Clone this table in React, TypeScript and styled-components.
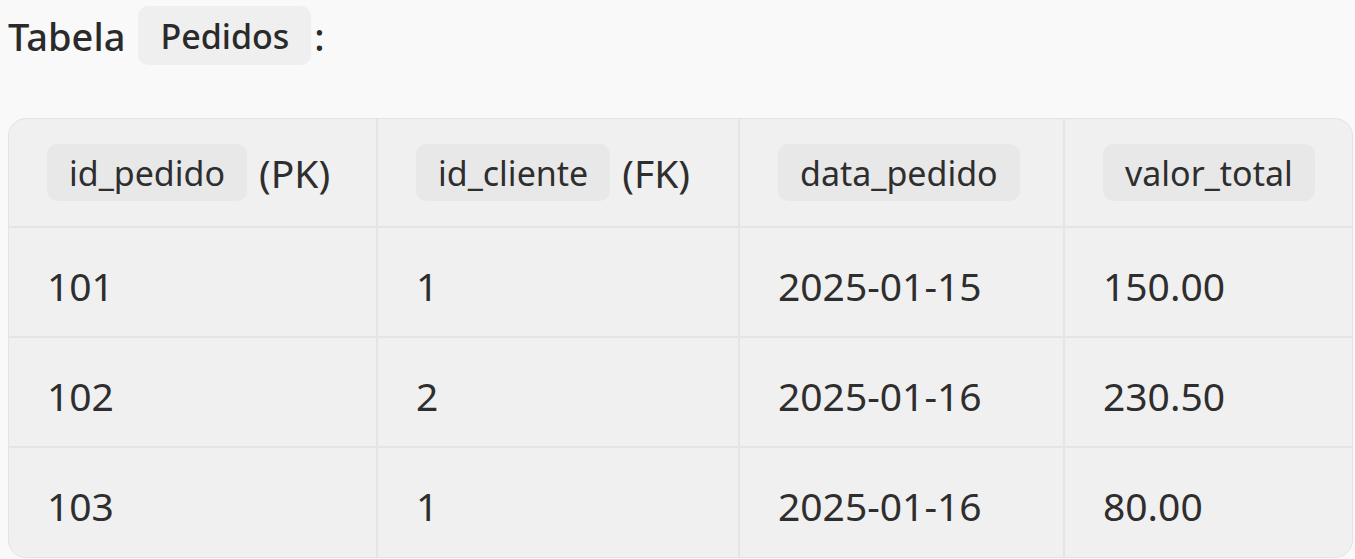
import React from "react";
import styled, { createGlobalStyle } from "styled-components";

const GlobalStyle = createGlobalStyle`
  html, body {
    margin: 0;
    padding: 0;
    background: #f9f9f9;
  }
  body {
    font-family: "Noto Sans", "Open Sans", sans-serif;
    color: #2e2e2e;
  }
`;

const Page = styled.div`
  padding: 6px 0 0 8px;
`;

const Title = styled.h3`
  margin: 0;
  height: 59px;
  display: flex;
  align-items: center;
  font-size: 38px;
  font-weight: 500;
  color: #2a2a2a;
  line-height: 1;
`;

const TitleChip = styled.code`
  font-family: inherit;
  font-size: 34px;
  font-weight: 500;
  height: 59px;
  display: inline-flex;
  align-items: center;
  padding: 0 22px;
  margin: 0 3px 0 13px;
  border-radius: 10px;
  background: #efefef;
`;

const Table = styled.div`
  margin-top: 53px;
  width: 1345px;
  box-sizing: border-box;
  border: 1px solid #e3e3e3;
  border-radius: 18px;
  overflow: hidden;
  background: #f0f0f0;
  display: grid;
  grid-template-columns: 369px 362px 325px 287px;
`;

const Cell = styled.div<{ $head?: boolean; $lastCol?: boolean; $lastRow?: boolean }>`
  box-sizing: border-box;
  height: ${(p) => (p.$head || p.$lastRow ? 109 : 110)}px;
  padding-left: 38px;
  display: flex;
  align-items: center;
  gap: 12px;
  font-size: 39px;
  line-height: 1;
  border-right: ${(p) => (p.$lastCol ? "none" : "2px solid #e4e4e4")};
  border-bottom: ${(p) => (p.$lastRow ? "none" : "2px solid #e4e4e4")};
  white-space: nowrap;
`;

const DataText = styled.span`
  position: relative;
  top: 3px;
`;

const ColChip = styled.code`
  font-family: inherit;
  font-size: 34px;
  height: 57px;
  display: inline-flex;
  align-items: center;
  padding: 0 22px;
  border-radius: 10px;
  background: #e8e8e8;
  color: #2e2e2e;
`;

const headers: { name: string; tag?: string }[] = [
  { name: "id_pedido", tag: "(PK)" },
  { name: "id_cliente", tag: "(FK)" },
  { name: "data_pedido" },
  { name: "valor_total" },
];

const rows = [
  ["101", "1", "2025-01-15", "150.00"],
  ["102", "2", "2025-01-16", "230.50"],
  ["103", "1", "2025-01-16", "80.00"],
];

export default function App() {
  return (
    <>
      <GlobalStyle />
      <Page>
        <Title>
          Tabela<TitleChip>Pedidos</TitleChip>:
        </Title>
        <Table>
          {headers.map((h, i) => (
            <Cell key={h.name} $head $lastCol={i === headers.length - 1}>
              <ColChip>{h.name}</ColChip>
              {h.tag && <span>{h.tag}</span>}
            </Cell>
          ))}
          {rows.map((r, ri) =>
            r.map((v, ci) => (
              <Cell
                key={`${ri}-${ci}`}
                $lastCol={ci === r.length - 1}
                $lastRow={ri === rows.length - 1}
              >
                <DataText>{v}</DataText>
              </Cell>
            ))
          )}
        </Table>
      </Page>
    </>
  );
}
